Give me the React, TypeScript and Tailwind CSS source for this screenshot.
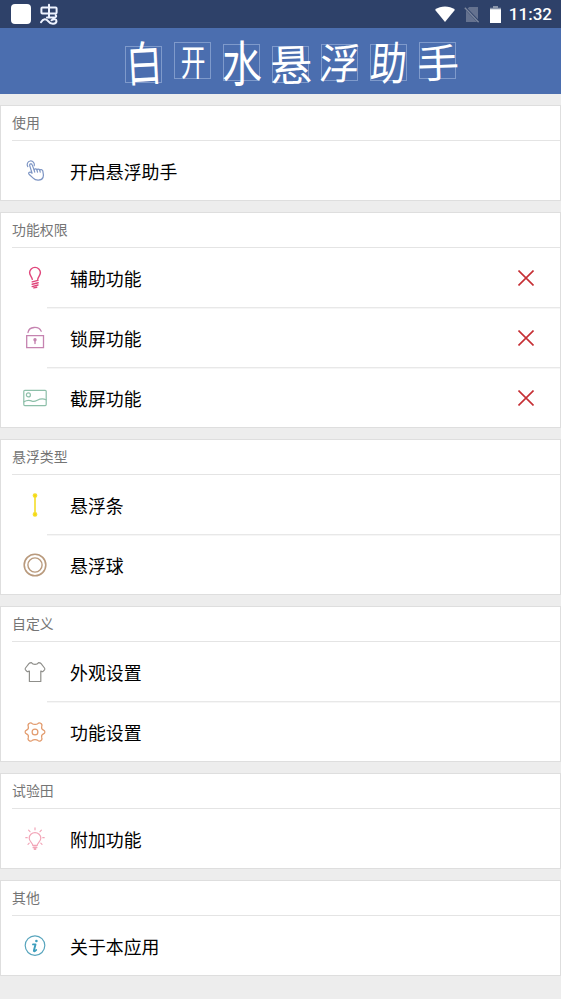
import { ReactNode } from "react";

type Item = {
  label: string;
  icon: ReactNode;
  denied?: boolean;
};

type Section = {
  title: string;
  items: Item[];
};

function Icon({ color, children }: { color: string; children: ReactNode }) {
  return (
    <svg
      className="w-6 h-6 overflow-visible"
      viewBox="0 0 24 24"
      fill="none"
      stroke={color}
      strokeWidth="1.2"
      strokeLinecap="round"
      strokeLinejoin="round"
    >
      {children}
    </svg>
  );
}

const sections: Section[] = [
  {
    title: "使用",
    items: [
      {
        label: "开启悬浮助手",
        icon: (
          <Icon color="#7d95c4">
            <path d="M4.8 7.6a3.6 3.6 0 1 1 6.4-.9" />
            <path d="m9.1 14.2-2.4-7.6c-.5-1.8 1.9-2.4 2.5-.7l1.9 5c.2-1.3 2.2-1.5 2.8 0 .3-1.1 2.2-1.1 2.8.2.6-.9 2.8-.6 3.1.9.5 2.1 1 4.3.3 6.2-.7 2.1-2.3 2.9-4.7 2.9-2.5.1-3.9-.5-5.2-2l-4.2-3.9c-1.1-1.3.5-2.6 1.7-2z" />
            <path d="m11.1 10.9.6 2.3M13.9 10.9l.6 2.3M16.7 11.1l.5 2.1" />
          </Icon>
        ),
      },
    ],
  },
  {
    title: "功能权限",
    items: [
      {
        label: "辅助功能",
        denied: true,
        icon: (
          <Icon color="#e0457b">
            <path strokeWidth="1.4" d="M9.3 13.3C8.8 10.6 6.6 9.6 6.6 6.6a5.4 5.2 0 0 1 10.8 0c0 3-2.2 4-2.7 6.7" />
            <path strokeWidth="1.4" d="m9.2 15.9 5.8-1.5M9.2 18.3l6-1.6M9.2 20.6l5.8-1.6M10.8 21.9l3-.7" />
          </Icon>
        ),
      },
      {
        label: "锁屏功能",
        denied: true,
        icon: (
          <Icon color="#c583b0">
            <path strokeWidth="1.3" strokeLinejoin="miter" d="M3.7 9.6h16.8v12H3.7z" />
            <path strokeWidth="1.3" d="M5 6.5C6 .3 15.7-.2 18.2 5.2" />
            <path strokeWidth="1.4" d="M12 14v3.6" />
            <circle cx="12" cy="13.8" r="1.1" fill="#c583b0" />
          </Icon>
        ),
      },
      {
        label: "截屏功能",
        denied: true,
        icon: (
          <Icon color="#8dbfa9">
            <rect x=".8" y="4.3" width="22.4" height="15.3" rx="1" />
            <circle cx="5.4" cy="8.9" r="2" />
            <path d="M1 15.8c3.4-2.2 5.4-1.8 8-.7 4.8 1.8 6.5-4.6 14-1.4" />
          </Icon>
        ),
      },
    ],
  },
  {
    title: "悬浮类型",
    items: [
      {
        label: "悬浮条",
        icon: (
          <Icon color="#f5df35">
            <path strokeWidth="1.7" d="M12 3v18" />
            <circle cx="12" cy="2.6" r="1.8" fill="#f5d90a" />
            <circle cx="12" cy="21.4" r="1.8" fill="#f5d90a" />
          </Icon>
        ),
      },
      {
        label: "悬浮球",
        icon: (
          <Icon color="#b99a7d">
            <circle cx="12" cy="12" r="10.8" strokeWidth="1.6" />
            <circle cx="12" cy="12" r="7.1" strokeWidth="1.4" />
          </Icon>
        ),
      },
    ],
  },
  {
    title: "自定义",
    items: [
      {
        label: "外观设置",
        icon: (
          <Icon color="#8f8f8b">
            <path d="M8.6 2.7c1.2 2.3 5.6 2.3 6.8 0 1 0 2 .1 2.7 1l3.4 4.3c.5.7.6 1.1 0 1.8l-1.4 1.5c-.5.5-1 .5-1.6 0L17.8 11v10.5H6.4V11l-.9.3c-.6.5-1.1.5-1.6 0L2.5 9.8c-.6-.7-.5-1.1 0-1.8l3.4-4.3c.7-.9 1.7-1 2.7-1z" />
          </Icon>
        ),
      },
      {
        label: "功能设置",
        icon: (
          <Icon color="#e29a6c">
            <path d="M9.3 3.7c1.2.9 4.2.9 5.4 0 .9-1 2.1-1.1 3-.4 1.3.9 1.6 2 1 3.3-.4 1.5.5 3 1.8 3.5 1 .4 1.4 1.1 1.4 1.9s-.4 1.5-1.4 1.9c-1.3.5-2.2 2-1.8 3.5.6 1.3.3 2.4-1 3.3-.9.7-2.1.6-3-.4-1.2-.9-4.2-.9-5.4 0-.9 1-2.1 1.1-3 .4-1.3-.9-1.6-2-1-3.3.4-1.5-.5-3-1.8-3.5-1-.4-1.4-1.1-1.4-1.9s.4-1.5 1.4-1.9c1.3-.5 2.2-2 1.8-3.5-.6-1.3-.3-2.4 1-3.3.9-.7 2.1-.6 3 .4z" />
            <circle cx="12" cy="12" r="2.9" />
          </Icon>
        ),
      },
    ],
  },
  {
    title: "试验田",
    items: [
      {
        label: "附加功能",
        icon: (
          <Icon color="#f2a6b8">
            <path d="M9.8 18.4c0-2.6-3.6-3.8-3.6-7.2a5.8 5.6 0 0 1 11.6 0c0 3.4-3.6 4.6-3.6 7.2z" />
            <path strokeWidth="1.8" d="M10.4 20.4h3.2M11.5 22.1h1" />
            <path d="M12 .8v2M5.6 3.2 7 4.7M18.4 3.2 17 4.7M2.8 10.7h1.4M19.8 10.7h1.4M5 17.4l1.2-1.2M19 17.4l-1.2-1.2" />
          </Icon>
        ),
      },
    ],
  },
  {
    title: "其他",
    items: [
      {
        label: "关于本应用",
        icon: (
          <Icon color="#58a5bd">
            <circle cx="12" cy="11.6" r="9.8" />
            <circle cx="13.4" cy="7" r="1.3" fill="#3d9ebd" stroke="none" />
            <path stroke="#3d9ebd" strokeWidth="1.9" d="M10 10.4h2.5l-1.6 6.2c-.2 1.1 1.1.9 2.3-.6" />
          </Icon>
        ),
      },
    ],
  },
];

// each character sits in its own copybook square, brushed a bit differently
const brand = [
  { char: "白", box: "mt-[18px]", glyph: "-rotate-3 scale-x-95 scale-y-125 -translate-y-1" },
  { char: "开", box: "mt-[14px]", glyph: "scale-x-65 scale-y-95" },
  { char: "水", box: "mt-4", glyph: "scale-x-105 scale-y-125 -translate-y-0.5" },
  { char: "悬", box: "mt-[18px]", glyph: "-rotate-2 scale-x-110 scale-y-115 -translate-y-0.5" },
  { char: "浮", box: "mt-4", glyph: "-skew-x-6 scale-x-105 scale-y-110 -translate-y-0.5" },
  { char: "助", box: "mt-4", glyph: "-skew-x-6 scale-x-95 scale-y-120 -translate-y-0.5" },
  { char: "手", box: "mt-[14px]", glyph: "-rotate-2 scale-x-110 scale-y-105" },
];

function StatusBar() {
  return (
    <div className="h-7 bg-[#2e4169] flex items-center justify-between pl-[11px] pr-[9px] text-white">
      <div className="flex items-center gap-2">
        <div className="size-5 rounded-[4px] bg-white" />
        <svg className="w-5 h-[22px]" viewBox="0 0 20 22" fill="none" stroke="#eef3ff" strokeWidth="2" strokeLinecap="round" strokeLinejoin="round">
          <path d="M3.4 4.4h13.2q1 0 1 1v4.2q0 1-1 1H3.4q-1 0-1-1V5.4q0-1 1-1zM10 1.8v12.4" />
          <path d="M2 19.2c2.2-3.6 5.2-3.8 7.4-.8 2.4 3.4 7.8 3 8.1-.3.1-2-2.7-2.6-5-.9M8 14.4h7.4c2 0 2.2-1.6 1.2-2.4" />
        </svg>
      </div>
      <div className="flex items-center">
        <svg className="w-5 h-4" viewBox="0 0 20 16" fill="#fff">
          <path d="M0 3.8c6-4.4 14-4.4 20 0L10 16z" />
        </svg>
        <svg className="w-4 h-[17px] ml-[9px]" viewBox="0 0 16 17">
          <path d="M5.2 1H14v12.2L3.6 2.6zM2 4.5V16h11z" fill="#65728f" />
          <path d="m.8 1.8 13.8 14.5" stroke="#7e899f" strokeWidth="1.3" />
        </svg>
        <svg className="w-[11px] h-[17px] ml-[10px]" viewBox="0 0 11 17">
          <path d="M3 0h5v1.8h3V4H0V1.8h3z" fill="#8a95aa" />
          <path d="M0 3.3h11V17H0z" fill="#fff" />
        </svg>
        <span className="ml-[8px] font-['Roboto',sans-serif] font-medium text-[17px] leading-none">11:32</span>
      </div>
    </div>
  );
}

function Header() {
  return (
    <h1 className="h-[66px] bg-[#4b6eaf] flex items-start gap-[12px] pl-[125px] text-white font-normal">
      {brand.map(({ char, box, glyph }) => (
        <span
          key={char}
          className={`w-[37px] h-[37px] border border-[#7f9acb] flex items-center justify-center ${box}`}
        >
          <span className={`text-[38px] leading-none ${glyph}`}>{char}</span>
        </span>
      ))}
    </h1>
  );
}

function Row({ item, first }: { item: Item; first: boolean }) {
  return (
    <li className="h-[60px] flex pl-[22px]">
      <div className="w-6 flex items-center">{item.icon}</div>
      <div className={`flex-1 flex items-center justify-between pl-[23px] pr-[26px] ${first ? "" : "shadow-[0_-1px_0_#e8e8e8,inset_0_1px_0_#f6f6f6]"}`}>
        <span className="pt-px text-[17.9px] leading-none text-black">{item.label}</span>
        {item.denied && (
          <svg className="size-4" viewBox="0 0 16 16" stroke="#c62f35" strokeWidth="1.6">
            <path d="m.5.5 15 15M15.5.5l-15 15" />
          </svg>
        )}
      </div>
    </li>
  );
}

export default function App() {
  return (
    <div className="w-[561px] h-[999px] overflow-hidden bg-[#ededed] font-['Noto_Sans_CJK_SC',sans-serif]">
      <StatusBar />
      <Header />
      <main className="flex flex-col gap-[11px] pt-[11px]">
        {sections.map((section) => (
          <section key={section.title} className="bg-white shadow-[inset_0_0_0_1px_#dedede]">
            <h2 className="h-9 ml-3 mr-px flex items-center border-b border-[#e4e4e4] text-[13.9px] leading-none text-[#757575]">
              {section.title}
            </h2>
            <ul className="ml-px mr-px">
              {section.items.map((item, i) => (
                <Row key={item.label} item={item} first={i === 0} />
              ))}
            </ul>
          </section>
        ))}
      </main>
    </div>
  );
}
